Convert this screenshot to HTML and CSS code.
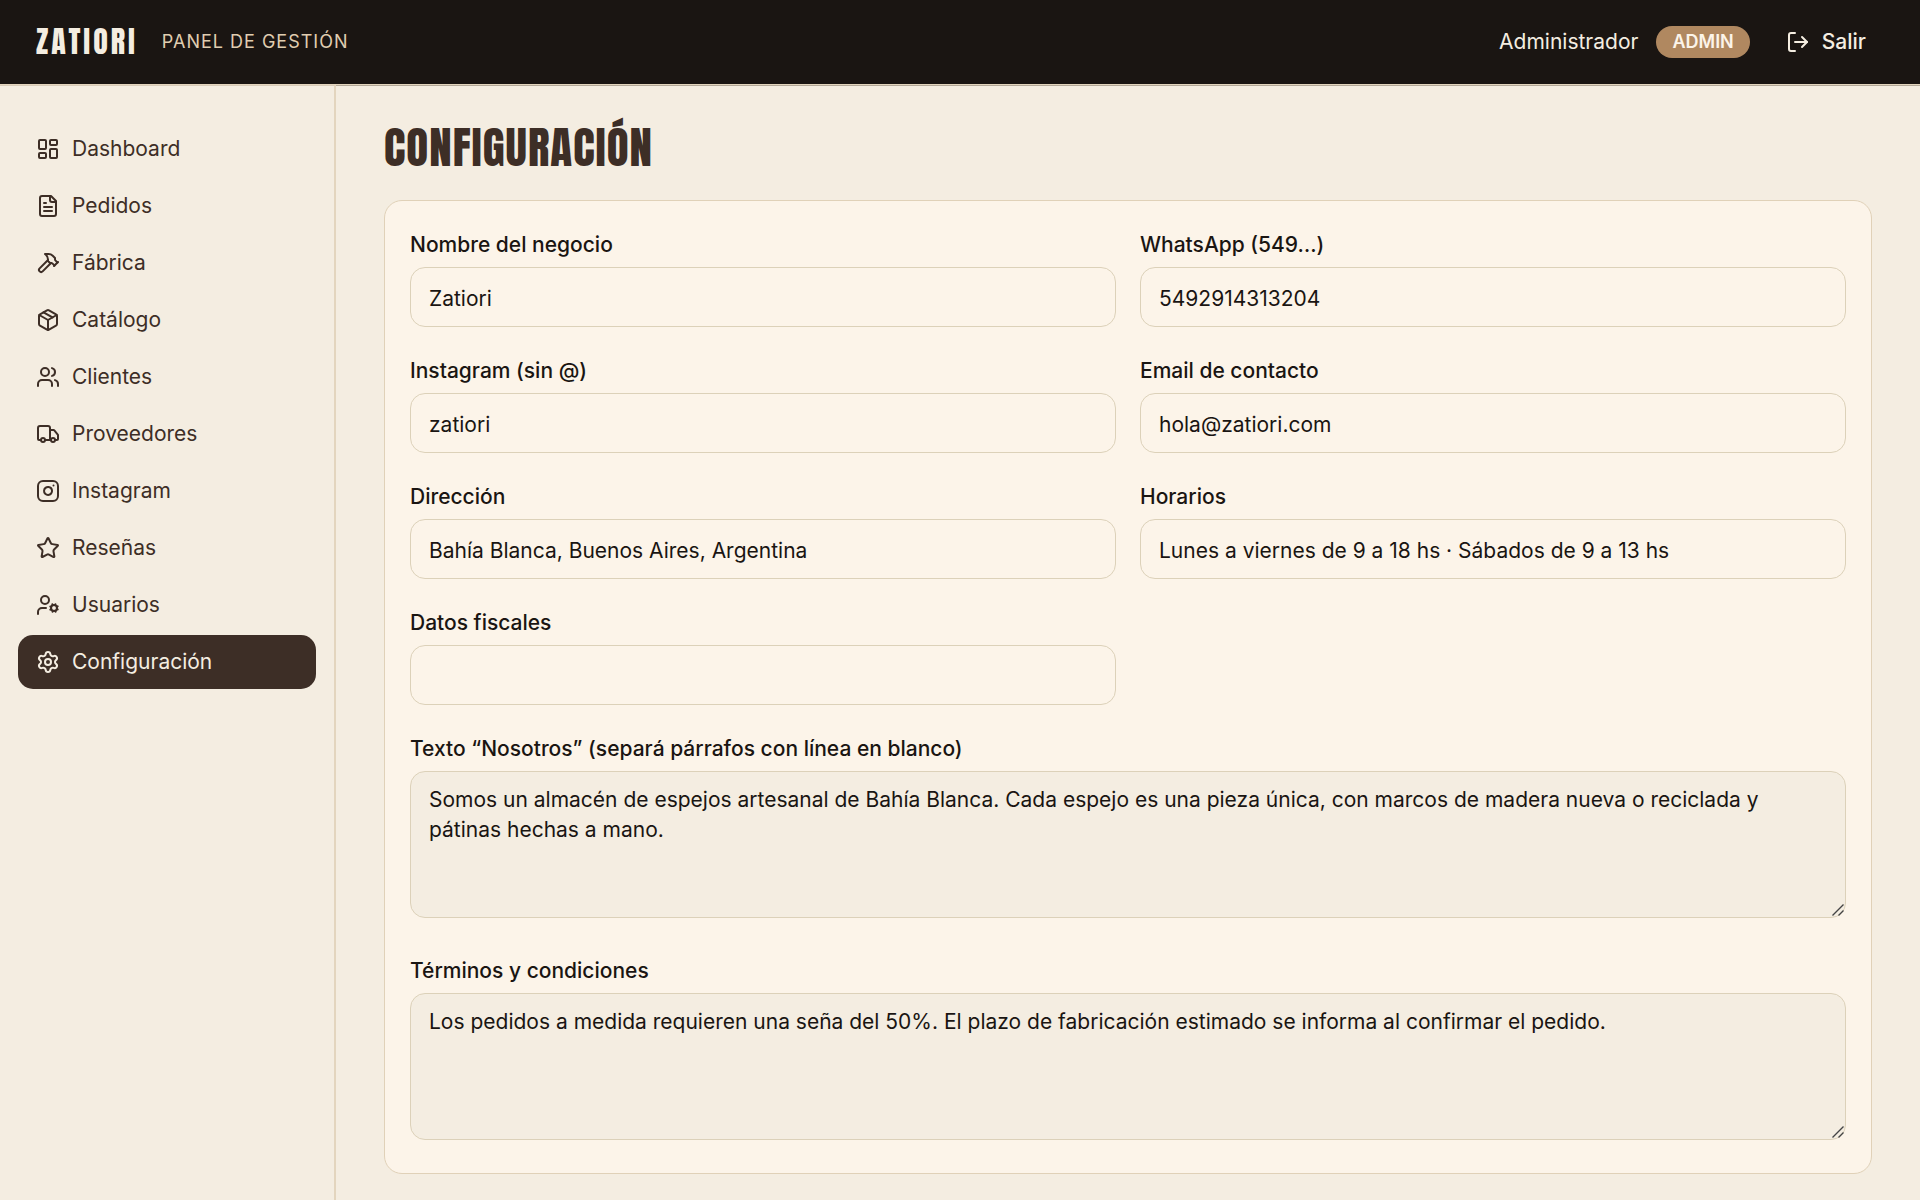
FILE: index.html
```html
<!DOCTYPE html>
<html lang="es">
<head>
<meta charset="utf-8">
<meta name="viewport" content="width=device-width, initial-scale=1">
<title>Configuración · Zatiori</title>
<link rel="stylesheet" href="styles.css">
</head>
<body>
<header class="topbar">
  <div class="brand">
    <a class="brand-name" href="#">ZATIORI</a>
    <span class="brand-sub">PANEL DE GESTIÓN</span>
  </div>
  <div class="account">
    <span class="account-name">Administrador</span>
    <span class="badge">ADMIN</span>
    <button class="logout" type="button">
      <svg class="icon" viewBox="0 0 24 24"><path d="m16 17 5-5-5-5"/><path d="M21 12H9"/><path d="M9 21H5a2 2 0 0 1-2-2V5a2 2 0 0 1 2-2h4"/></svg>
      Salir
    </button>
  </div>
</header>
<div class="shell">
  <nav class="sidebar">
    <a class="nav-link" href="#"><svg class="icon" viewBox="0 0 24 24"><rect width="7" height="9" x="3" y="3" rx="1"/><rect width="7" height="5" x="14" y="3" rx="1"/><rect width="7" height="9" x="14" y="12" rx="1"/><rect width="7" height="5" x="3" y="16" rx="1"/></svg>Dashboard</a>
    <a class="nav-link" href="#"><svg class="icon" viewBox="0 0 24 24"><path d="M15 2H6a2 2 0 0 0-2 2v16a2 2 0 0 0 2 2h12a2 2 0 0 0 2-2V7Z"/><path d="M14 2v4a2 2 0 0 0 2 2h4"/><path d="M10 9H8"/><path d="M16 13H8"/><path d="M16 17H8"/></svg>Pedidos</a>
    <a class="nav-link" href="#"><svg class="icon" viewBox="0 0 24 24"><path d="m15 12-8.373 8.373a1 1 0 1 1-3-3L12 9"/><path d="m18 15 4-4"/><path d="m21.5 11.5-1.914-1.914A2 2 0 0 1 19 8.172V7l-2.26-2.26a6 6 0 0 0-4.202-1.756L9 2.96l.92.82A6.18 6.18 0 0 1 12 8.4V10l2 2h1.172a2 2 0 0 1 1.414.586L18.5 14.5"/></svg>Fábrica</a>
    <a class="nav-link" href="#"><svg class="icon" viewBox="0 0 24 24"><path d="M11 21.73a2 2 0 0 0 2 0l7-4A2 2 0 0 0 21 16V8a2 2 0 0 0-1-1.73l-7-4a2 2 0 0 0-2 0l-7 4A2 2 0 0 0 3 8v8a2 2 0 0 0 1 1.73z"/><path d="M12 22V12"/><path d="M3.29 7 12 12l8.71-5"/><path d="m7.5 4.27 9 5.15"/></svg>Catálogo</a>
    <a class="nav-link" href="#"><svg class="icon" viewBox="0 0 24 24"><path d="M16 21v-2a4 4 0 0 0-4-4H6a4 4 0 0 0-4 4v2"/><circle cx="9" cy="7" r="4"/><path d="M22 21v-2a4 4 0 0 0-3-3.87"/><path d="M16 3.13a4 4 0 0 1 0 7.75"/></svg>Clientes</a>
    <a class="nav-link" href="#"><svg class="icon" viewBox="0 0 24 24"><path d="M14 18V6a2 2 0 0 0-2-2H4a2 2 0 0 0-2 2v11a1 1 0 0 0 1 1h2"/><path d="M15 18H9"/><path d="M19 18h2a1 1 0 0 0 1-1v-3.65a1 1 0 0 0-.22-.624l-3.48-4.35A1 1 0 0 0 17.52 8H14"/><circle cx="17" cy="18" r="2"/><circle cx="7" cy="18" r="2"/></svg>Proveedores</a>
    <a class="nav-link" href="#"><svg class="icon" viewBox="0 0 24 24"><rect width="20" height="20" x="2" y="2" rx="5"/><path d="M16 11.37A4 4 0 1 1 12.63 8 4 4 0 0 1 16 11.37z"/><path d="M17.5 6.5h.01"/></svg>Instagram</a>
    <a class="nav-link" href="#"><svg class="icon" viewBox="0 0 24 24"><path d="M11.525 2.295a.53.53 0 0 1 .95 0l2.31 4.679a2.123 2.123 0 0 0 1.595 1.16l5.166.756a.53.53 0 0 1 .294.904l-3.736 3.638a2.123 2.123 0 0 0-.611 1.878l.882 5.14a.53.53 0 0 1-.771.56l-4.618-2.428a2.122 2.122 0 0 0-1.973 0L6.396 21.01a.53.53 0 0 1-.77-.56l.881-5.139a2.122 2.122 0 0 0-.611-1.879L2.16 9.795a.53.53 0 0 1 .294-.906l5.165-.755a2.122 2.122 0 0 0 1.597-1.16z"/></svg>Reseñas</a>
    <a class="nav-link" href="#"><svg class="icon" viewBox="0 0 24 24"><circle cx="18" cy="15" r="3"/><circle cx="9" cy="7" r="4"/><path d="M10 15H6a4 4 0 0 0-4 4v2"/><path d="m21.7 16.4-.9-.3"/><path d="m15.2 13.9-.9-.3"/><path d="m16.6 18.7.3-.9"/><path d="m19.1 12.2.3-.9"/><path d="m19.6 18.7-.4-1"/><path d="m16.8 12.3-.4-1"/><path d="m14.3 16.6 1-.4"/><path d="m20.7 13.8 1-.4"/></svg>Usuarios</a>
    <a class="nav-link nav-link-active" href="#" aria-current="page"><svg class="icon" viewBox="0 0 24 24"><path d="M9.671 4.136a2.34 2.34 0 0 1 4.659 0 2.34 2.34 0 0 0 3.319 1.915 2.34 2.34 0 0 1 2.33 4.033 2.34 2.34 0 0 0 0 3.831 2.34 2.34 0 0 1-2.33 4.033 2.34 2.34 0 0 0-3.319 1.915 2.34 2.34 0 0 1-4.659 0 2.34 2.34 0 0 0-3.32-1.915 2.34 2.34 0 0 1-2.33-4.033 2.34 2.34 0 0 0 0-3.831A2.34 2.34 0 0 1 6.35 6.051a2.34 2.34 0 0 0 3.319-1.915"/><circle cx="12" cy="12" r="3"/></svg>Configuración</a>
  </nav>
  <main class="content">
    <h1 class="title">CONFIGURACIÓN</h1>
    <form class="card">
      <div class="field"><label for="nombre">Nombre del negocio</label><input id="nombre" type="text" value="Zatiori"></div>
      <div class="field"><label for="whatsapp">WhatsApp (549…)</label><input id="whatsapp" type="text" value="5492914313204"></div>
      <div class="field"><label for="instagram">Instagram (sin @)</label><input id="instagram" type="text" value="zatiori"></div>
      <div class="field"><label for="email">Email de contacto</label><input id="email" type="text" value="hola@zatiori.com"></div>
      <div class="field"><label for="direccion">Dirección</label><input id="direccion" type="text" value="Bahía Blanca, Buenos Aires, Argentina"></div>
      <div class="field"><label for="horarios">Horarios</label><input id="horarios" type="text" value="Lunes a viernes de 9 a 18 hs · Sábados de 9 a 13 hs"></div>
      <div class="field"><label for="fiscales">Datos fiscales</label><input id="fiscales" type="text" value=""></div>
      <div class="field field-wide"><label for="nosotros">Texto “Nosotros” (separá párrafos con línea en blanco)</label><textarea id="nosotros" rows="4">Somos un almacén de espejos artesanal de Bahía Blanca. Cada espejo es una pieza única, con marcos de madera nueva o reciclada y pátinas hechas a mano.</textarea></div>
      <div class="field field-wide"><label for="terminos">Términos y condiciones</label><textarea id="terminos" rows="4">Los pedidos a medida requieren una seña del 50%. El plazo de fabricación estimado se informa al confirmar el pedido.</textarea></div>
    </form>
  </main>
</div>
</body>
</html>
```
FILE: styles.css
```css
:root {
  --ink: #1a1512;
  --brown: #3d2e26;
  --cream: #f4ede1;
  --paper: #fcf4e9;
  --sand: #e3d5be;
  --copper: #b08860;
  --display: Anton, "Liberation Sans Narrow", "DejaVu Sans Condensed", sans-serif;
}

* { box-sizing: border-box; }

body {
  display: flex;
  flex-direction: column;
  min-height: 100vh;
  margin: 0;
  background: var(--cream);
  color: var(--ink);
  font: 21px/30px Inter, sans-serif;
}

a { color: inherit; text-decoration: none; }

.icon {
  flex: none;
  width: 24px;
  height: 24px;
  fill: none;
  stroke: currentColor;
  stroke-width: 2;
  stroke-linecap: round;
  stroke-linejoin: round;
}

.topbar {
  display: flex;
  align-items: center;
  justify-content: space-between;
  height: 85px;
  padding: 0 36px;
  border-bottom: 1px solid var(--sand);
  background: var(--ink);
  color: var(--cream);
}

.brand, .account { display: flex; align-items: center; }
.brand { gap: 24px; }
.account { gap: 18px; }

.brand-name {
  font: 30px/36px var(--display);
  letter-spacing: 3px;
}

.brand-sub {
  color: #e0cdb0;
  font-size: 18px;
  letter-spacing: 1px;
}

.badge {
  padding: 0 16px;
  border-radius: 16px;
  background: var(--copper);
  color: var(--paper);
  font-size: 18px;
  font-weight: 600;
  line-height: 32px;
}

.logout {
  display: flex;
  align-items: center;
  gap: 12px;
  padding: 8px 18px;
  border: 0;
  background: none;
  color: inherit;
  font: 500 21px/30px Inter, sans-serif;
}

.shell { display: flex; flex: 1; }

.sidebar {
  display: flex;
  flex: none;
  flex-direction: column;
  gap: 3px;
  width: 336px;
  padding: 36px 18px;
  border-top: 1px solid #d8cbb8;
  border-right: 2px solid var(--sand);
}

.nav-link {
  display: flex;
  align-items: center;
  gap: 12px;
  padding: 12px 18px;
  border-radius: 15px;
  color: var(--brown);
}

.nav-link-active { background: var(--brown); color: var(--cream); }

.content {
  flex: 1;
  min-width: 0;
  padding: 24px 48px;
  border-top: 1px solid #b3a898;
}

.title {
  margin: 0 0 16px;
  color: var(--brown);
  font: 45px/74px var(--display);
  letter-spacing: 1px;
}

.card {
  display: grid;
  grid-template-columns: 1fr 1fr;
  gap: 29px 24px;
  padding: 29px 25px 33px;
  border: 1px solid #e0d1b8;
  border-radius: 18px;
  background: var(--paper);
}

.field { display: flex; flex-direction: column; gap: 7px; }
.field-wide { grid-column: 1 / -1; }
.field-wide + .field-wide { margin-top: 9px; }
.field label { font-weight: 500; }

.field input, .field textarea {
  width: 100%;
  border: 1px solid #dcd1b9;
  border-radius: 15px;
  color: inherit;
  font: inherit;
}

.field input { height: 60px; padding: 2px 18px 0; background: var(--paper); }

.field textarea {
  display: block;
  height: 147px;
  padding: 13px 18px;
  background: var(--cream);
  resize: vertical;
}

.field textarea::-webkit-resizer {
  background: url("data:image/svg+xml,%3Csvg xmlns='http://www.w3.org/2000/svg' viewBox='0 0 15 15'%3E%3Cpath d='M2.5 13.5l11-11M8.5 13.5l5-5' stroke='%23444' stroke-width='1.4'/%3E%3C/svg%3E") no-repeat;
}
```
